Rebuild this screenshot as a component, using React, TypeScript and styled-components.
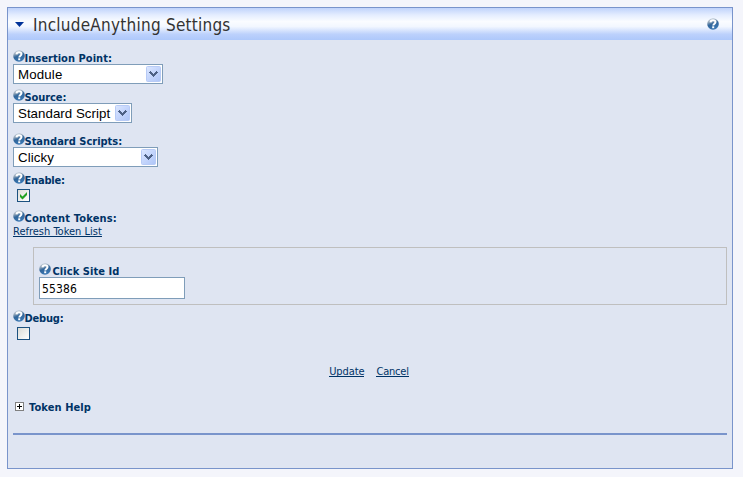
import React from 'react';
import styled, { createGlobalStyle } from 'styled-components';

const GlobalStyle = createGlobalStyle`
  * { box-sizing: border-box; }
  body {
    margin: 0;
    background: #f4f5fb;
    font-family: "DejaVu Sans Condensed", "DejaVu Sans", sans-serif;
    font-size: 11px;
    color: #003366;
  }
`;

const Panel = styled.section`
  margin: 7px 0 0 7px;
  width: 726px;
  height: 462px;
  border: 1px solid #7994cb;
  background: #dfe5f2;
`;

const Header = styled.header`
  display: flex;
  align-items: center;
  height: 32px;
  padding: 0 13px 0 7px;
  background: linear-gradient(#c0d3fb 0%, #e4edff 22%, #fafcff 42%, #f2f7ff 58%, #bcd1fc 82%, #aec8fb 100%);
`;

const Title = styled.h1`
  flex: 1;
  margin: 2px 0 0 9px;
  font-family: "DejaVu Sans Condensed", "DejaVu Sans", sans-serif;
  font-size: 17px;
  line-height: 22px;
  font-weight: 400;
  letter-spacing: 0.24px;
  color: #333;
  white-space: nowrap;
`;

const Body = styled.div`
  padding: 10px 5px 0;
`;

const Field = styled.div<{ $height: number }>`
  height: ${p => p.$height}px;
`;

const Label = styled.div<{ $gap?: number; $spacing?: number }>`
  display: flex;
  height: 14px;
  gap: ${p => p.$gap ?? 0}px;
  span {
    font-weight: 700;
    margin-left: -0.5px;
    line-height: 17px;
    letter-spacing: ${p => p.$spacing ?? 0}px;
    white-space: nowrap;
  }
  svg { flex: none; }
`;

const SelectBox = styled.div<{ $width: number; $spacing?: number }>`
  display: flex;
  align-items: center;
  justify-content: space-between;
  width: ${p => p.$width}px;
  height: 20px;
  padding: 0 1px 0 4px;
  border: 1px solid #7f9db9;
  background: #fff;
  color: #000;
  font: 13.3px/18px "Liberation Sans", Arial, sans-serif;
  letter-spacing: ${p => p.$spacing ?? 0}px;
  white-space: nowrap;
  span { margin-top: 1px; }
  svg { flex: none; }
`;

const CheckBox = styled.div`
  display: flex;
  align-items: center;
  justify-content: center;
  width: 13px;
  height: 13px;
  margin: 3px 0 0 4px;
  border: 1px solid #1c5180;
  background: linear-gradient(135deg, #dcdcd7, #fff);
`;

const Link = styled.a<{ $spacing?: number }>`
  display: block;
  width: max-content;
  height: 13px;
  border-bottom: 1px solid #003366;
  line-height: 15px;
  letter-spacing: ${p => p.$spacing ?? 0}px;
  white-space: nowrap;
`;

const TokenGroup = styled.div`
  height: 58px;
  margin: 0 0 5px 20px;
  padding: 15px 0 0 5px;
  border: 1px solid #bfbfbf;
`;

const TextInput = styled.div`
  width: 146px;
  height: 22px;
  padding-left: 2px;
  border: 1px solid #7f9db9;
  background: #fff;
  color: #000;
  font-size: 12px;
  line-height: 22px;
  letter-spacing: 0.13px;
`;

const Actions = styled.div`
  display: flex;
  justify-content: center;
  gap: 12px;
  height: 38px;
  padding-right: 2px;
`;

const HelpSection = styled.div`
  display: flex;
  height: 31px;
  padding-left: 2px;
  gap: 5px;
  font-weight: 700;
  line-height: 11px;
  letter-spacing: 0.1px;
`;

const Divider = styled.div`
  height: 2px;
  background: #7994cb;
`;

const HelpIcon = ({ id }: { id: string }) => (
  <svg width="12" height="12" viewBox="0 0 12 12">
    <defs>
      <linearGradient id={id} x1="0.1" y1="0" x2="0.5" y2="1">
        <stop offset="0" stopColor="#dde3ea" />
        <stop offset="0.32" stopColor="#8fa3b7" />
        <stop offset="0.55" stopColor="#31669b" />
        <stop offset="1" stopColor="#3a78b5" />
      </linearGradient>
    </defs>
    <circle cx="6" cy="6" r="5.8" fill={`url(#${id})`} />
    <path d="M3.5 4.3C3.7 1.7 8.5 1.5 8.5 4.1C8.5 5.6 6.4 5.8 6.3 7.5" fill="none" stroke="#fff" strokeWidth="2" />
    <rect x="5.2" y="8.3" width="2" height="1.9" fill="#fff" />
  </svg>
);

const DropButton = () => (
  <svg width="15" height="16" viewBox="0 0 15 16">
    <defs>
      <linearGradient id="drop" x1="0" y1="0" x2="1" y2="1">
        <stop offset="0" stopColor="#dce7ff" />
        <stop offset="0.5" stopColor="#c4d5fc" />
        <stop offset="1" stopColor="#aec5f7" />
      </linearGradient>
    </defs>
    <rect x="0.5" y="0.5" width="14" height="15" rx="1" fill="url(#drop)" stroke="#b8cbf6" />
    <path d="M4 5h1v1h1v1h1v1h1V7h1V6h1V5h1v1h1v1h-1v1h-1v1H9v1H8v1H7v-1H6V9H5V8H4V7H3V6h1z" fill="#4d6185" />
  </svg>
);

const Select = ({ width, spacing, children }: { width: number; spacing?: number; children: React.ReactNode }) => (
  <SelectBox $width={width} $spacing={spacing}><span>{children}</span><DropButton /></SelectBox>
);

const FieldLabel = ({ id, text, gap, spacing }: { id: string; text: string; gap?: number; spacing?: number }) => (
  <Label $gap={gap} $spacing={spacing}><HelpIcon id={id} /><span>{text}</span></Label>
);

export default function App() {
  return (
    <>
      <GlobalStyle />
      <Panel>
        <Header>
          <svg width="9" height="5" viewBox="0 0 9 5"><path d="M0 0h9L4.5 5z" fill="#003399" /></svg>
          <Title>IncludeAnything Settings</Title>
          <HelpIcon id="header-help" />
        </Header>
        <Body>
          <Field $height={39}>
            <FieldLabel id="insertion" text="Insertion Point:" spacing={0.04} />
            <Select width={150} spacing={0.15}>Module</Select>
          </Field>
          <Field $height={44}>
            <FieldLabel id="source" text="Source:" spacing={-0.08} />
            <Select width={119} spacing={0.03}>Standard Script</Select>
          </Field>
          <Field $height={39}>
            <FieldLabel id="scripts" text="Standard Scripts:" />
            <Select width={145} spacing={0.1}>Clicky</Select>
          </Field>
          <Field $height={38}>
            <FieldLabel id="enable" text="Enable:" spacing={-0.2} />
            <CheckBox>
              <svg width="9" height="9" viewBox="0 0 9 9"><path d="M1 3l2.5 2.5L8 1v3L3.5 8.5 1 6z" fill="#21a121" /></svg>
            </CheckBox>
          </Field>
          <Field $height={37}>
            <FieldLabel id="tokens" text="Content Tokens:" spacing={0.18} />
            <Link>Refresh Token List</Link>
          </Field>
          <TokenGroup>
            <FieldLabel id="site" text="Click Site Id" gap={2} spacing={0.06} />
            <TextInput>55386</TextInput>
          </TokenGroup>
          <Field $height={54}>
            <FieldLabel id="debug" text="Debug:" spacing={-0.2} />
            <CheckBox />
          </Field>
          <Actions>
            <Link $spacing={-0.1}>Update</Link>
            <Link $spacing={-0.2}>Cancel</Link>
          </Actions>
          <HelpSection>
            <svg width="9" height="9" viewBox="0 0 9 9">
              <rect x="0.5" y="0.5" width="8" height="8" fill="#fff" stroke="#808080" />
              <path d="M2 4h5v1H2zM4 2h1v5H4z" fill="#000" />
            </svg>
            <span>Token Help</span>
          </HelpSection>
          <Divider />
        </Body>
      </Panel>
    </>
  );
}
